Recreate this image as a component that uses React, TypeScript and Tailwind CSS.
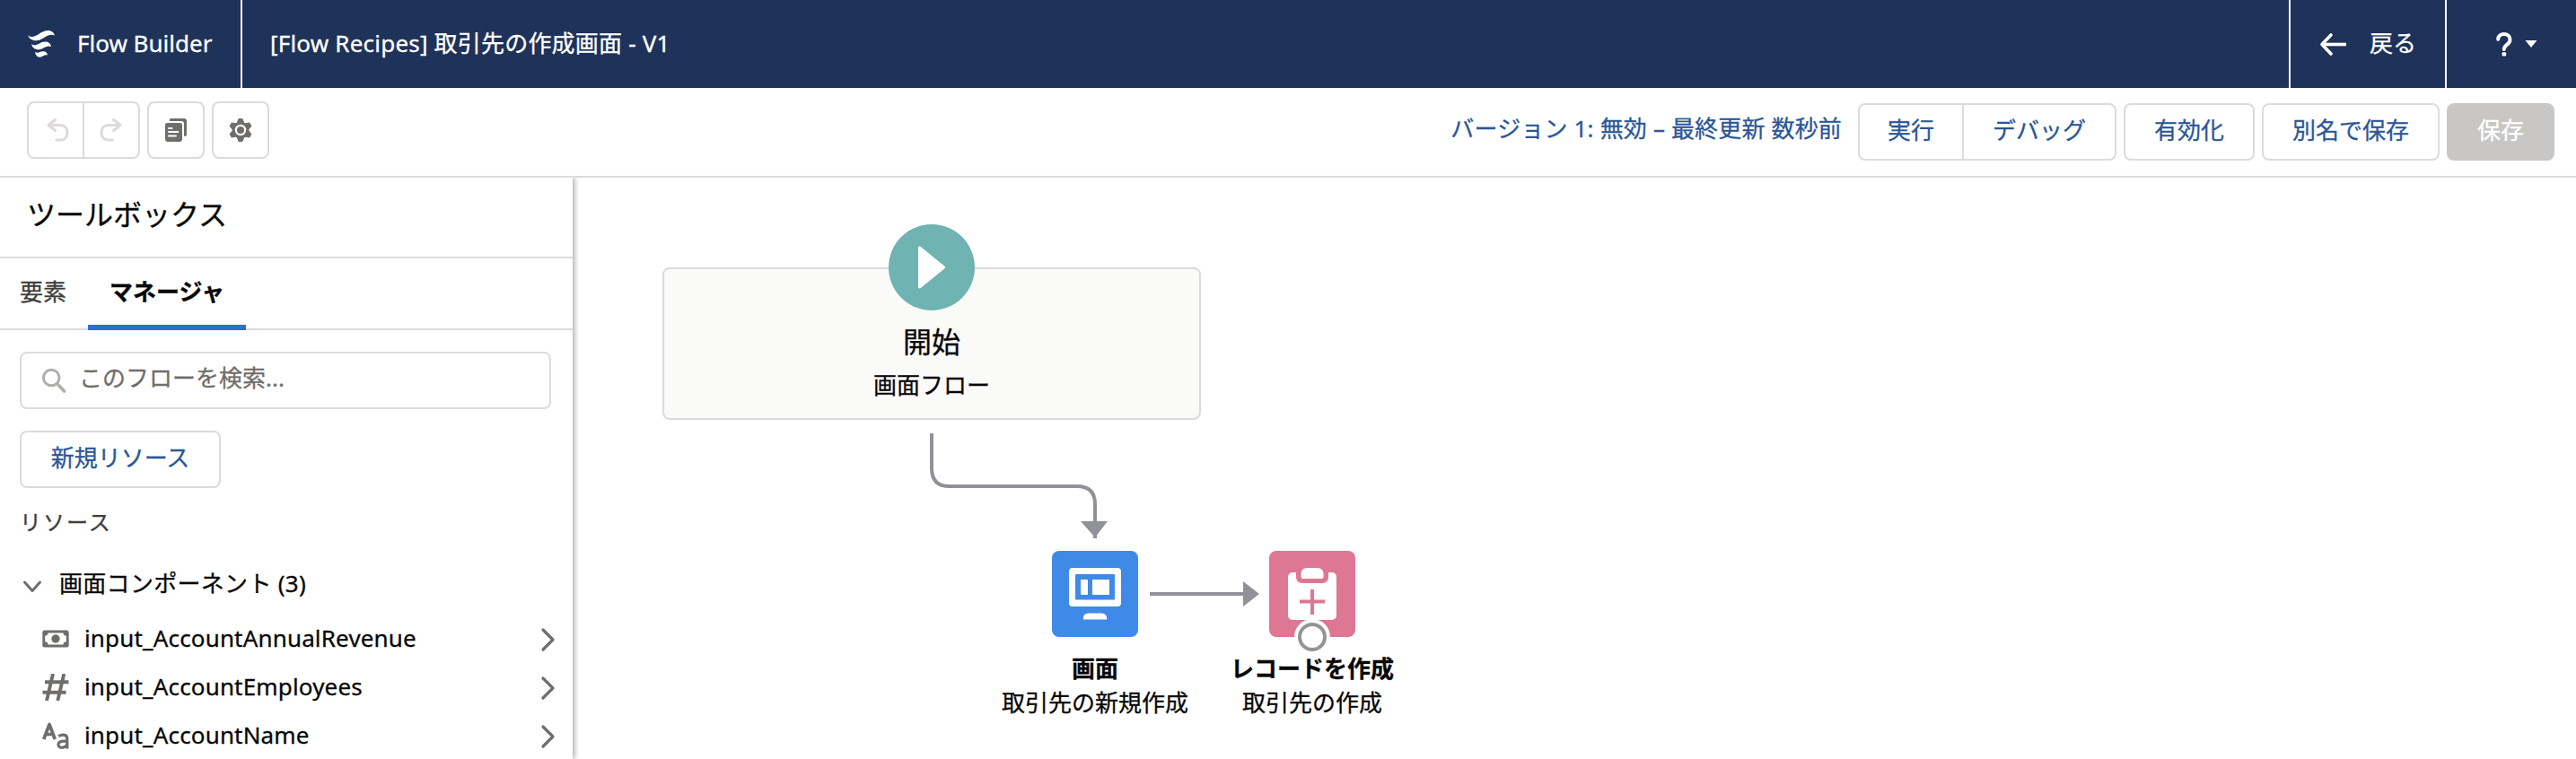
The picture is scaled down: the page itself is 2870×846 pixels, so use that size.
import type { ReactNode } from "react";

function FlowLogo() {
  return (
    <svg className="h-8 w-8" viewBox="0 0 32 32" fill="#fff">
      <path d="M1.2 6.2C3 8.2 6 8.4 9 7.2C14 5.2 17.500 1 23.500 1C27.500 1 30.500 3.500 30.800 6.700C28.500 5.300 26 5.600 23.200 6.800C18.500 8.900 15.500 12.300 10.500 12.300C6 12.300 2 9.800 1.200 6.200Z" />
      <path d="M5.200 16.300C7 17.600 9 17.600 11.200 16.800C14.500 15.500 16.500 13.600 20.500 13.600C23.800 13.600 26.600 15.500 26.900 19C25.300 18.200 23.600 18.200 21.700 19C18.300 20.400 16 22.300 12.500 22.300C8.800 22.300 5.800 19.900 5.200 16.300Z" />
      <path d="M9.200 25C10.300 25.900 11.700 26 13.200 25.500C15 24.900 16.300 24.200 18.500 24.300C21 24.400 22.800 25.800 23 28.500C21.800 28.100 20.700 28.200 19.500 28.700C17.700 29.400 16.300 30.700 14.200 30.700C11.500 30.700 9.200 28.300 9.200 25Z" />
    </svg>
  );
}

function UndoIcon({ className }: { className?: string }) {
  return (
    <svg className={className} width="28" height="28" viewBox="0 0 28 28" fill="none" stroke="#dddbda" strokeWidth="3.200" strokeLinecap="round" strokeLinejoin="round">
      <path d="M11.500 2.500L4 8.500L11.500 14.500" />
      <path d="M5 8.500H17.500C22 8.500 25 12 25 16.800C25 21.500 22 25 17.500 25H12.800" />
    </svg>
  );
}

function PagesIcon() {
  return (
    <svg width="26" height="28" viewBox="0 0 26 28" fill="none">
      <path d="M6.500 1H22.200C23.800 1 25 2.200 25 3.800V18.800C25 20.300 24 21 22 21V6.500C22 4.900 21 4 19.500 4H6C6 2.500 6.200 1.800 6.500 1Z" fill="#706e6b" />
      <rect x="1" y="6" width="19" height="21" rx="2.400" fill="#706e6b" />
      <path d="M4.300 12H9.300M4.300 16H16M4.300 20.500H13.700" stroke="#fff" strokeWidth="2" />
    </svg>
  );
}

const gearTeeth = [0, 60, 120, 180, 240, 300];

function GearIcon() {
  return (
    <svg width="26" height="28" viewBox="-13 -14 26 28">
      <g fill="#706e6b" stroke="#706e6b" strokeLinejoin="round" strokeWidth="1">
        <circle r="8.800" />
        {gearTeeth.map((angle) => (
          <path key={angle} d="M-2 -12.500H2L3.800 -8H-3.800Z" transform={`rotate(${angle})`} />
        ))}
      </g>
      <circle r="5.100" fill="#706e6b" stroke="#fff" strokeWidth="2.200" />
    </svg>
  );
}

function BackArrow() {
  return (
    <svg width="32" height="28" viewBox="0 0 32 28" fill="none" stroke="#fff" strokeWidth="3.600" strokeLinecap="round" strokeLinejoin="round">
      <path d="M13 4L3 14.500L13 25" />
      <path d="M4 14.500H30" strokeLinecap="butt" />
    </svg>
  );
}

function HelpIcon() {
  return (
    <svg width="20" height="28" viewBox="0 0 20 28" fill="none" stroke="#fff">
      <path d="M3.200 8.800C3.200 5.200 6 3 9.800 3C13.700 3 16.500 5.500 16.500 9.200C16.500 15.200 9.800 14.600 9.800 20" strokeWidth="4" strokeLinecap="round" />
      <rect x="7.600" y="23.200" width="4.600" height="4.200" rx="1" fill="#fff" stroke="none" />
    </svg>
  );
}

function SearchIcon() {
  return (
    <svg width="28" height="28" viewBox="0 0 28 28" fill="none" stroke="#b0adab" strokeWidth="3" strokeLinecap="round">
      <circle cx="11.200" cy="11" r="8.800" />
      <path d="M18 18L25.500 26" strokeWidth="3.600" />
    </svg>
  );
}

function MoneyIcon() {
  return (
    <svg width="30" height="30" viewBox="0 0 30 30">
      <rect x="0.300" y="5.500" width="29.400" height="19" rx="2.500" fill="#706e6b" />
      <path d="M6.500 8.500H23.500C23.500 10.500 24.800 11.700 26.800 11.700V18.300C24.800 18.300 23.500 19.500 23.500 21.500H6.500C6.500 19.500 5.200 18.300 3.200 18.300V11.700C5.200 11.700 6.500 10.500 6.500 8.500Z" fill="#fff" />
      <circle cx="15" cy="15" r="4.700" fill="#706e6b" />
    </svg>
  );
}

function HashIcon() {
  return (
    <svg width="30" height="30" viewBox="0 0 30 30" fill="none" stroke="#706e6b" strokeWidth="3.900">
      <path d="M12 0L5 30M24.300 0L17.300 30M3 9.200H29.500M0.500 20.800H26.500" />
    </svg>
  );
}

function TextIcon() {
  return (
    <svg width="30" height="30" viewBox="0 0 30 30" fill="none" stroke="#706e6b">
      <path d="M1.700 19L8 2.500L14.300 19M4 13.500H12" strokeWidth="3.700" strokeLinejoin="round" />
      <path d="M18.300 15.600C21 13.600 27.800 12.900 27.800 18.200V29.500M27.800 20.800C21 20.600 18 21.900 18 25.100C18 29.500 25 29.300 27.800 25.200" strokeWidth="3.200" />
    </svg>
  );
}

function Button({ children, className }: { children: ReactNode; className: string }) {
  return (
    <button className={`flex h-16 items-center justify-center border-2 pb-1 text-[26px] leading-none ${className}`}>
      {children}
    </button>
  );
}

function ResourceRow({ icon, name }: { icon: ReactNode; name: string }) {
  return (
    <li className="flex h-[54px] items-center">
      <span className="mt-0.5 flex w-[47px]">{icon}</span>
      <span className="grow tracking-[0.16px]">{name}</span>
      <svg className="mt-1 mr-[19px]" width="18" height="28" viewBox="0 0 18 28" fill="none" stroke="#706e6b" strokeWidth="3.200" strokeLinecap="round" strokeLinejoin="round">
        <path d="M4 3L15 14L4 25" />
      </svg>
    </li>
  );
}

function NodeLabel({ title, text, className }: { title: string; text: string; className: string }) {
  return (
    <div className={`absolute flex w-[240px] flex-col items-center text-[26px] leading-[38px] whitespace-nowrap ${className}`}>
      <b>{title}</b>
      <span>{text}</span>
    </div>
  );
}

export default function App() {
  return (
    <div className="flex h-[846px] w-[2870px] flex-col overflow-hidden bg-white font-['Noto_Sans','Noto_Sans_CJK_JP',sans-serif] text-[26px] leading-[36px] text-[#080707] [-webkit-text-stroke:0.3px]">
      <header className="flex h-[98px] shrink-0 bg-[#1f3259] text-white">
        <div className="flex w-[270px] items-center border-r-2 border-white pl-[30px]">
          <FlowLogo />
          <span className="-mt-0.5 ml-6">Flow Builder</span>
        </div>
        <div className="flex grow items-center pl-[31px]">
          <span className="-mt-0.5 tracking-[0.2px]">[Flow Recipes] 取引先の作成画面 - V1</span>
        </div>
        <div className="flex w-[176px] items-center border-x-2 border-white pl-8">
          <BackArrow />
          <span className="-mt-0.5 ml-6">戻る</span>
        </div>
        <div className="flex w-[144px] items-center pl-[54px]">
          <HelpIcon />
          <svg className="ml-3" width="16" height="10" viewBox="0 0 16 10" fill="#fff">
            <path d="M1.500 1H14.500L8 9Z" />
          </svg>
        </div>
      </header>

      <div className="flex h-[100px] shrink-0 items-center justify-between border-b-2 border-[#dddbda] pr-6 pl-[30px]">
        <div className="flex gap-2 pb-1">
          <div className="flex">
            <button className="flex h-16 w-16 items-center justify-center rounded-l-lg border-2 border-[#dddbda]">
              <UndoIcon className="ml-1" />
            </button>
            <button className="-ml-0.5 flex h-16 w-16 items-center justify-center rounded-r-lg border-2 border-[#dddbda]">
              <UndoIcon className="-scale-x-100" />
            </button>
          </div>
          <button className="flex h-16 w-16 items-center justify-center rounded-lg border-2 border-[#dddbda]">
            <PagesIcon />
          </button>
          <button className="flex h-16 w-16 items-center justify-center rounded-lg border-2 border-[#dddbda]">
            <GearIcon />
          </button>
        </div>
        <div className="flex items-center gap-2">
          <span className="-mt-2 mr-2.5 tracking-[0.16px] text-[#2b5797]">バージョン 1: 無効 – 最終更新 数秒前</span>
          <div className="flex">
            <Button className="w-[118px] rounded-l-lg border-[#dddbda] text-[#2b5797]">実行</Button>
            <Button className="-ml-0.5 w-[172px] rounded-r-lg border-[#dddbda] text-[#2b5797]">デバッグ</Button>
          </div>
          <Button className="w-[146px] rounded-lg border-[#dddbda] text-[#2b5797]">有効化</Button>
          <Button className="w-[198px] rounded-lg border-[#dddbda] text-[#2b5797]">別名で保存</Button>
          <Button className="w-[120px] rounded-lg border-[#c9c7c5] bg-[#c9c7c5] text-white">保存</Button>
        </div>
      </div>

      <main className="flex grow overflow-hidden">
        <aside className="z-10 flex w-[638px] shrink-0 flex-col bg-white shadow-[2px_0_6px_rgba(0,0,0,0.35)]">
          <h2 className="flex h-[90px] shrink-0 items-center border-b-2 border-[#dddbda] pb-1.5 pl-[30px] text-[32px]">ツールボックス</h2>
          <nav className="flex h-[80px] shrink-0 border-b-2 border-[#dddbda]">
            <a className="flex h-[80px] w-[98px] items-center pb-1.5 pl-[22px] text-[#3e3e3c]">要素</a>
            <a className="flex h-[80px] w-[176px] items-center border-b-[6px] border-[#2d6fcf] pl-6 font-bold">マネージャ</a>
          </nav>
          <div className="flex flex-col items-start pt-6 pl-[22px]">
            <label className="flex h-16 w-[592px] items-center rounded-lg border-2 border-[#dddbda] pl-[22px]">
              <SearchIcon />
              <span className="-mt-1.5 ml-[14px] text-[#706e6b]">このフローを検索...</span>
            </label>
            <Button className="mt-6 w-[224px] rounded-lg border-[#dddbda] text-[#2b5797]">新規リソース</Button>
            <h3 className="mt-5 text-[24px] tracking-[2px] text-[#3e3e3c]">リソース</h3>
            <div className="mt-[34px] flex items-center">
              <svg className="mt-1.5 ml-[3px]" width="22" height="14" viewBox="0 0 22 14" fill="none" stroke="#706e6b" strokeWidth="3" strokeLinecap="round" strokeLinejoin="round">
                <path d="M2.500 2L11 11.500L19.500 2" />
              </svg>
              <span className="-mt-0.5 ml-[19px] tracking-[0.3px]">画面コンポーネント (3)</span>
            </div>
          </div>
          <ul className="mt-4 pl-[47px]">
            <ResourceRow icon={<MoneyIcon />} name="input_AccountAnnualRevenue" />
            <ResourceRow icon={<HashIcon />} name="input_AccountEmployees" />
            <ResourceRow icon={<TextIcon />} name="input_AccountName" />
          </ul>
        </aside>

        <section className="relative grow">
          <div className="absolute top-[100px] left-[100px] flex h-[170px] w-[600px] flex-col items-center rounded-lg border-2 border-[#dddbda] bg-[#fafaf9]">
            <svg className="-mt-[50px] shrink-0" width="96" height="96" viewBox="0 0 96 96">
              <circle cx="48" cy="48" r="48" fill="#6fb3b3" />
              <path d="M34.500 26L61.500 48L34.500 70Z" fill="#fff" stroke="#fff" strokeWidth="3" strokeLinejoin="round" />
            </svg>
            <span className="mt-[13px] text-[32px] leading-[44px]">開始</span>
            <span className="mt-2">画面フロー</span>
          </div>

          <svg className="absolute top-[280px] left-[390px]" width="400" height="210" viewBox="1028 478 400 210">
            <path d="M1038 483V522Q1038 542 1058 542H1200Q1220 542 1220 562V600" fill="none" stroke="#919297" strokeWidth="4" />
            <path d="M1204 581H1234L1220 599Z" fill="#919297" />
            <path d="M1281 662H1390" fill="none" stroke="#919297" strokeWidth="4" />
            <path d="M1385 648L1403 662L1385 676Z" fill="#919297" />
          </svg>

          <svg className="absolute top-[416px] left-[534px]" width="96" height="96" viewBox="0 0 96 96">
            <rect width="96" height="96" rx="8" fill="#3f8ae6" />
            <rect x="19" y="19" width="58" height="43" rx="4" fill="#fff" />
            <rect x="26" y="26" width="44" height="28.500" rx="1" fill="#3f8ae6" />
            <rect x="32" y="32" width="8" height="17" rx="0.800" fill="#fff" />
            <rect x="45" y="32" width="19" height="17" rx="0.800" fill="#fff" />
            <path d="M34.800 76.500V75.500Q34.800 69.500 41 69.500H55Q61.200 69.500 61.200 75.500V76.500Z" fill="#fff" />
          </svg>
          <NodeLabel className="top-[528px] left-[462px]" title="画面" text="取引先の新規作成" />

          <svg className="absolute top-[416px] left-[776px]" width="96" height="118" viewBox="0 0 96 118">
            <rect width="96" height="96" rx="8" fill="#dd7793" />
            <rect x="21" y="24" width="54" height="53" rx="5" fill="#fff" />
            <path d="M30 22H66V29Q66 36 59 36H37Q30 36 30 29Z" fill="#dd7793" />
            <path d="M35.500 29V26Q35.500 19 42.500 19H53.500Q60.500 19 60.500 26V29Q60.500 31 58.500 31H37.500Q35.500 31 35.500 29Z" fill="#fff" />
            <path d="M48 43V71M34 56.500H62" stroke="#dd7793" strokeWidth="4" />
            <circle cx="48" cy="96" r="20" fill="#fff" />
            <circle cx="48" cy="96" r="14" fill="#fff" stroke="#969492" strokeWidth="4" />
          </svg>
          <NodeLabel className="top-[528px] left-[704px]" title="レコードを作成" text="取引先の作成" />
        </section>
      </main>
    </div>
  );
}
